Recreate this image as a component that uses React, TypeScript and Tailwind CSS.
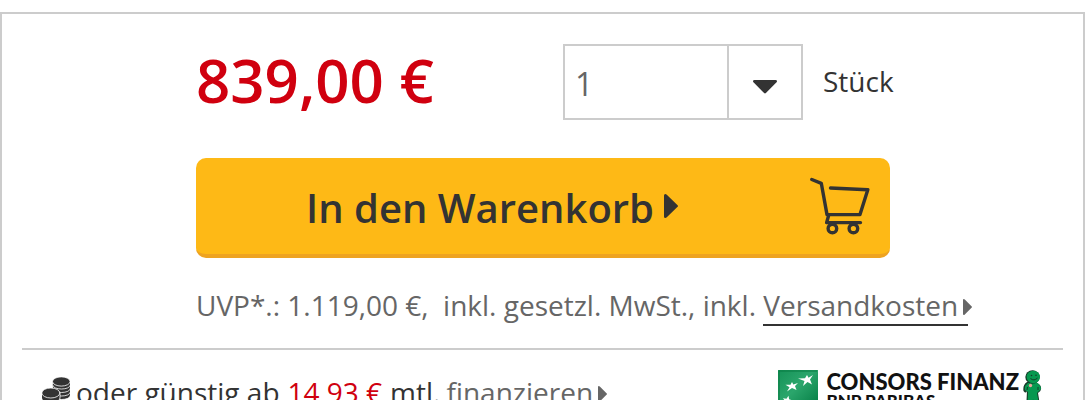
import React from 'react';

function CaretRight({ className }: { className: string }) {
  return (
    <svg viewBox="0 0 14 24" className={className} fill="currentColor" aria-hidden="true" preserveAspectRatio="none">
      <path d="M0 1.5Q0 0 1.3 0Q2 0 2.8.8L13.6 11.2Q14.4 12 13.6 12.8L2.8 23.2Q2 24 1.3 24Q0 24 0 22.5Z" />
    </svg>
  );
}

function CaretDown() {
  return (
    <svg viewBox="0 0 24 14" className="mt-2.5 h-3.5 w-6" fill="currentColor" aria-hidden="true">
      <path d="M1.5 0H22.5Q24 0 24 1.2Q24 1.9 23.3 2.5L12.9 13Q12 13.9 11.1 13L.7 2.5Q0 1.9 0 1.2Q0 0 1.5 0Z" />
    </svg>
  );
}

function CartIcon() {
  return (
    <svg
      viewBox="0 0 60 58"
      className="h-[58px] w-[60px]"
      fill="none"
      stroke="currentColor"
      strokeWidth="3.4"
      strokeLinecap="round"
      strokeLinejoin="round"
      aria-hidden="true"
    >
      <path d="M1.800 2.500L11.300 6.300L17 37.600H50L57.800 12.700L20.500 11" />
      <path d="M18.500 39L16.600 45.600H50.500" />
      <circle cx="22.400" cy="51.500" r="4.300" />
      <circle cx="43.400" cy="51.500" r="4.300" />
    </svg>
  );
}

function Coins() {
  return (
    <svg viewBox="0 0 28 30" className="h-[30px] w-7" aria-hidden="true">
      <g fill="#333" stroke="#fff" strokeWidth=".8">
        <path d="M10.500 14.500V18C10.500 24 28.500 24 28.500 18V14.500Z" />
        <path d="M10.500 11V14.500C10.500 20.500 28.500 20.500 28.500 14.500V11Z" />
        <path d="M10.500 7.500V11C10.500 17 28.500 17 28.500 11V7.500Z" />
        <path d="M10.500 4.500V7.500C10.500 13.500 28.500 13.500 28.500 7.500V4.500Z" />
        <ellipse cx="19.300" cy="4.500" rx="8.800" ry="4.600" />
        <path d="M-.5 22V26C-.5 31.500 18 31.500 18 26V22Z" />
        <path d="M-.5 16V21C-.5 27 18 27 18 21V16Z" />
        <ellipse cx="8.800" cy="16" rx="9" ry="5" />
      </g>
    </svg>
  );
}

const star = 'M0-6L1.700-1.800L6.200-1.500L2.700 1.200L3.800 5.500L0 3L-3.800 5.500L-2.700 1.200L-6.200-1.500L-1.700-1.800Z';

function BankMark() {
  return (
    <svg viewBox="0 0 40 40" className="size-10" aria-hidden="true">
      <defs>
        <linearGradient id="bank-green" x1="0" y1="0" x2="1" y2="1">
          <stop offset="0" stopColor="#159257" />
          <stop offset=".45" stopColor="#2ba66c" />
          <stop offset="1" stopColor="#007940" />
        </linearGradient>
      </defs>
      <rect width="40" height="40" fill="url(#bank-green)" />
      <path d="M1 40V1H39" fill="none" stroke="#087a43" strokeWidth="1" />
      <g fill="#fff">
        <path d="M35 5L32 9.500L34 14.500L29.500 12L25 16L26.500 11L20 8.500L27 8.200L29 5L30.500 7.700Z" />
        <path d="M20 13L17 16L18.500 20L14 18L9 21.500L11.500 17.300L7.500 14.800L12.500 14.800L14 12L15.300 14.500Z" />
        <path d={star} transform="translate(9.500 30.500) rotate(12) scale(.8)" />
        <path d={star} transform="translate(22 36) rotate(25) scale(.6)" />
      </g>
    </svg>
  );
}

function Mascot() {
  return (
    <svg viewBox="0 0 20 42" className="h-[42px] w-5" aria-hidden="true">
      <path d="M4 12Q-.5 15 .5 21Q3 24 4 21L3 41H9L10 31L12 41H18L15 23Q20 20 17 15L13 12Z" fill="#163d29" />
      <path d="M5 13Q1 16 2 20L5 22L4.500 40H9L10 29L12.500 40H17L14 23L18 19Q18 15 13 12Z" fill="#07984f" />
      <ellipse cx="9.500" cy="7" rx="7.200" ry="6.700" fill="#163d29" />
      <ellipse cx="10.300" cy="7" rx="6.700" ry="6.200" fill="#07984f" />
      <circle cx="8.500" cy="5.500" r=".8" fill="#163d29" />
      <circle cx="13" cy="5.300" r=".8" fill="#163d29" />
      <path d="M7.500 8.500Q11 11.500 14.500 8" fill="none" stroke="#163d29" strokeWidth="1" />
      <path d="M4.500 17L4 20M15 17V20" stroke="#163d29" strokeWidth="1" />
      <circle cx="7.500" cy="15.500" r="1.700" fill="#e9a49a" />
    </svg>
  );
}

export default function App() {
  return (
    <main className="flex h-screen flex-col overflow-hidden bg-white pt-3 pr-0.5 font-['Open_Sans',sans-serif] text-[28px] leading-[42px] text-[#333]">
      <section className="grow border-2 border-b-0 border-[#ccc]">
        <div className="pt-[30px] pl-[194px]">
          <div className="flex h-[76px] items-center">
            <p className="w-[367px] pb-1 text-[60px] leading-[72px] font-semibold whitespace-nowrap text-[#d0000f]">839,00 €</p>
            <div className="flex h-[76px] w-60 border-2 border-[#ccc]">
              <input
                id="quantity"
                type="text"
                defaultValue="1"
                className="w-[162px] px-2.5 pt-1 text-[32px] text-[#666] outline-none"
              />
              <button type="button" aria-label="Menge wählen" className="flex grow items-center justify-center border-l-2 border-[#ccc]">
                <CaretDown />
              </button>
            </div>
            <label htmlFor="quantity" className="ml-5 pb-0.5">Stück</label>
          </div>
          <button
            type="button"
            className="mt-[38px] flex h-[100px] w-[694px] items-center rounded-[10px] border-b-4 border-[#eea320] bg-[#feb916] pr-5 pl-[110px] text-[40px] font-semibold"
          >
            <span className="pt-1">In den Warenkorb</span>
            <CaretRight className="ml-2.5 h-6 w-3.5" />
            <span className="ml-auto">
              <CartIcon />
            </span>
          </button>
          <p className="mt-[26px] flex whitespace-pre text-[#666]">
            <span>UVP*.: 1.119,00 €,  inkl. gesetzl. MwSt., inkl. </span>
            <a href="#versandkosten" className="flex h-[42px] border-b-2 border-[#333]">
              Versandkosten
              <CaretRight className="mt-[15px] -mr-1 ml-[5px] h-4 w-[9px]" />
            </a>
          </p>
        </div>
        <div className="mx-5 mt-[22px] border-t-2 border-[#ccc] px-5">
          <div className="flex items-start justify-between pt-5 whitespace-nowrap">
            <div className="flex items-center pt-px">
              <Coins />
              <p className="ml-1.5 flex items-center gap-2">
                <span>oder günstig ab</span>
                <span className="text-[#d0000f]">14,93 €</span>
                <span className="-mr-0.5">mtl.</span>
                <a href="#finanzieren" className="flex items-center text-[#666]">
                  finanzieren
                  <CaretRight className="mt-1 ml-[5px] h-4 w-[9px]" />
                </a>
              </p>
            </div>
            <div className="flex items-start">
              <BankMark />
              <div className="ml-2 pt-0.5 font-['Lato',sans-serif] font-black text-[#111]">
                <p className="text-[22px] leading-5">CONSORS FINANZ</p>
                <p className="text-[17px] leading-[18px]">BNP PARIBAS</p>
              </div>
              <span className="ml-1">
                <Mascot />
              </span>
            </div>
          </div>
        </div>
      </section>
    </main>
  );
}
